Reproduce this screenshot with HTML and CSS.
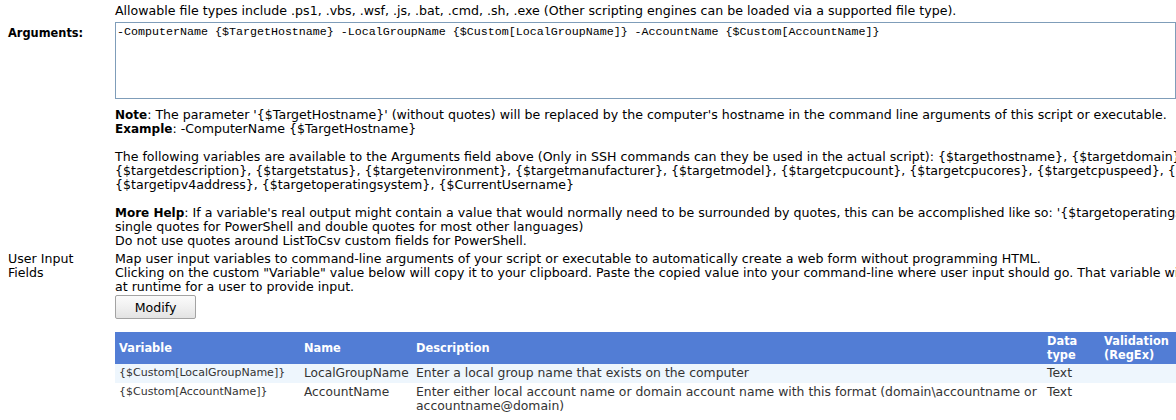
FILE: index.html
```html
<!DOCTYPE html>
<html>
<head>
<meta charset="utf-8">
<link rel="stylesheet" href="styles.css">
</head>
<body>
<div class="page">
  <div class="row">
    <div class="label"></div>
    <div class="content hint">Allowable file types include .ps1, .vbs, .wsf, .js, .bat, .cmd, .sh, .exe (Other scripting engines can be loaded via a supported file type).</div>
  </div>
  <div class="row row-args">
    <div class="label bold">Arguments:</div>
    <div class="content">
      <textarea class="args" spellcheck="false">-ComputerName {$TargetHostname} -LocalGroupName {$Custom[LocalGroupName]} -AccountName {$Custom[AccountName]}</textarea>
      <div class="help">
        <p class="line"><b>Note</b>: The parameter '{$TargetHostname}' (without quotes) will be replaced by the computer's hostname in the command line arguments of this script or executable.</p>
        <p class="line"><b>Example</b>: -ComputerName {$TargetHostname}</p>
        <p class="gap"></p>
        <p class="line">The following variables are available to the Arguments field above (Only in SSH commands can they be used in the actual script): {$targethostname}, {$targetdomain},</p>
        <p class="line">{$targetdescription}, {$targetstatus}, {$targetenvironment}, {$targetmanufacturer}, {$targetmodel}, {$targetcpucount}, {$targetcpucores}, {$targetcpuspeed}, {$targetmemory},</p>
        <p class="line">{$targetipv4address}, {$targetoperatingsystem}, {$CurrentUsername}</p>
        <p class="gap"></p>
        <p class="line"><b>More Help</b>: If a variable's real output might contain a value that would normally need to be surrounded by quotes, this can be accomplished like so: '{$targetoperatingsystem}' (use</p>
        <p class="line">single quotes for PowerShell and double quotes for most other languages)</p>
        <p class="line">Do not use quotes around ListToCsv custom fields for PowerShell.</p>
      </div>
    </div>
  </div>
  <div class="row row-input">
    <div class="label">User Input<br>Fields</div>
    <div class="content">
      <p class="line">Map user input variables to command-line arguments of your script or executable to automatically create a web form without programming HTML.</p>
      <p class="line">Clicking on the custom "Variable" value below will copy it to your clipboard. Paste the copied value into your command-line where user input should go. That variable will be prompted</p>
      <p class="line">at runtime for a user to provide input.</p>
      <button class="btn" type="button">Modify</button>
      <table class="grid">
        <colgroup>
          <col class="c-var"><col class="c-name"><col class="c-desc"><col class="c-type"><col class="c-val">
        </colgroup>
        <thead>
          <tr>
            <th>Variable</th>
            <th>Name</th>
            <th>Description</th>
            <th>Data<br>type</th>
            <th>Validation<br>(RegEx)</th>
          </tr>
        </thead>
        <tbody>
          <tr class="alt">
            <td class="var">{$Custom[LocalGroupName]}</td>
            <td class="name">LocalGroupName</td>
            <td>Enter a local group name that exists on the computer</td>
            <td>Text</td>
            <td></td>
          </tr>
          <tr>
            <td class="var">{$Custom[AccountName]}</td>
            <td class="name">AccountName</td>
            <td>Enter either local account name or domain account name with this format (domain\accountname or<br>accountname@domain)</td>
            <td>Text</td>
            <td></td>
          </tr>
        </tbody>
      </table>
    </div>
  </div>
</div>
</body>
</html>
```

FILE: styles.css
```css
html, body {
  margin: 0;
  padding: 0;
  overflow: hidden;
  background: #ffffff;
}

body {
  font-family: "DejaVu Sans", Verdana, sans-serif;
  font-size: 12.6px;
  line-height: 14px;
  color: #000000;
}

b {
  font-size: 12px;
}

.page {
  width: 1500px;
  padding: 4px 0 0 8px;
}

.row {
  display: grid;
  grid-template-columns: 107px 1385px;
}

.label {
  white-space: nowrap;
}

.bold {
  font-weight: bold;
  font-size: 11.4px;
}

.hint {
  white-space: nowrap;
}

.row-args {
  margin-top: 4px;
}

.row-args .label {
  padding-top: 4px;
}

.args {
  display: block;
  box-sizing: border-box;
  width: 1061px;
  height: 77px;
  margin: 0;
  padding: 2px 1px;
  border: 1px solid #7f9db9;
  font-family: "Liberation Mono", "Courier New", monospace;
  font-size: 11.67px;
  line-height: 14px;
  color: #000000;
  resize: none;
  background: #ffffff;
  outline: none;
}

.help {
  margin-top: 9px;
}

.line {
  margin: 0;
  white-space: nowrap;
  height: 14px;
}

.gap {
  margin: 0;
  height: 14px;
}

.row-input {
  margin-top: 4px;
}

.btn {
  display: block;
  box-sizing: border-box;
  width: 81px;
  height: 24px;
  margin-top: 1px;
  padding: 0;
  border: 1px solid #a3a3a3;
  border-radius: 2px;
  background: linear-gradient(#fbfbfb, #f0f0f0 50%, #e3e3e3);
  font-family: "DejaVu Sans", Verdana, sans-serif;
  font-size: 12.6px;
  color: #000000;
}

.grid {
  margin-top: 13px;
  border-collapse: collapse;
  table-layout: fixed;
  width: 1300px;
}

.c-var { width: 185px; }
.c-name { width: 112px; }
.c-desc { width: 631px; }
.c-type { width: 57px; }
.c-val { width: 315px; }

.grid th {
  background: #527dd5;
  color: #ffffff;
  font-weight: bold;
  font-size: 11.4px;
  text-align: left;
  vertical-align: middle;
  padding: 2px 4px;
  height: 28px;
}

.grid td {
  color: #333333;
  font-size: 12.4px;
  padding: 2px 4px 3px;
  vertical-align: top;
  white-space: nowrap;
}

.grid tr.alt td {
  background: #eef6fd;
}

.grid td.var {
  font-size: 11px;
}

.grid td.name {
  font-size: 12.2px;
}
```
